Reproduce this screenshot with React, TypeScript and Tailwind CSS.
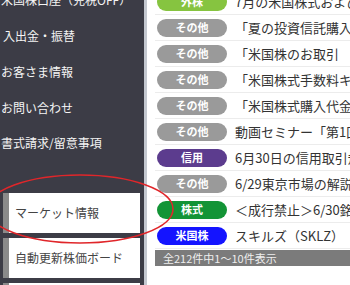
const font = { fontFamily: '"Noto Sans CJK JP", "Noto Sans", sans-serif' };

const news = [
  { tag: '外株', color: 'bg-[#86c440]', text: '7月の米国株式および取引時間について' },
  { tag: 'その他', color: 'bg-[#9a9a9a]', text: '「夏の投資信託購入キャンペーン」' },
  { tag: 'その他', color: 'bg-[#9a9a9a]', text: '「米国株のお取引' },
  { tag: 'その他', color: 'bg-[#9a9a9a]', text: '「米国株式手数料キャッシュバック」' },
  { tag: 'その他', color: 'bg-[#9a9a9a]', text: '「米国株式購入代金キャッシュバック」' },
  { tag: 'その他', color: 'bg-[#9a9a9a]', text: '動画セミナー「第1回」のご案内' },
  { tag: '信用', color: 'bg-[#5c3c8e]', text: '6月30日の信用取引規制について' },
  { tag: 'その他', color: 'bg-[#9a9a9a]', text: '6/29東京市場の解説' },
  { tag: '株式', color: 'bg-[#139436]', text: '＜成行禁止＞6/30銘柄について' },
  { tag: '米国株', color: 'bg-[#1414ff]', text: 'スキルズ（SKLZ）' },
];

function SideBox({ label }: { label: string }) {
  return (
    <div className="flex h-[40px] w-[137px] shrink-0 bg-white">
      <div className="w-[6px] bg-[#8a8a8a]" />
      <div className="flex items-center pl-[6px] text-[12px] text-[#444]">{label}</div>
    </div>
  );
}

export default function App() {
  return (
    <div className="relative flex h-[285px] w-[350px] overflow-hidden bg-white" style={font}>
      {/* sidebar */}
      <div className="flex w-[147px] shrink-0 flex-col border-r-[3px] border-[#c4c8d0] bg-[#3c3c46] pl-[1px] text-[12px] text-[#f4f4f4]">
        <div className="-mt-[8px] h-[16px] leading-[16px] whitespace-nowrap">米国株口座（免税OFF）</div>
        <div className="mt-[20px] h-[16px] pl-[2px] leading-[16px]">入出金・振替</div>
        <div className="mt-[20px] h-[16px] leading-[16px]">お客さま情報</div>
        <div className="mt-[20px] h-[16px] leading-[16px]">お問い合わせ</div>
        <div className="-ml-[1px] h-[5px] w-[3px] bg-white" />
        <div className="mt-[19px] h-[16px] leading-[16px] whitespace-nowrap">書式請求/留意事項</div>
        <div className="mt-[42px] flex flex-col gap-[5px] pl-[2px]">
          <SideBox label="マーケット情報" />
          <SideBox label="自動更新株価ボード" />
          <SideBox label="" />
        </div>
      </div>

      {/* news list */}
      <div className="flex min-w-0 flex-1 flex-col pl-[8px]">
        <div className="-mt-[11px] flex flex-col">
          {news.map((n, i) => (
            <div key={i} className="flex h-[26px] items-center border-b border-[#ececec] pl-[2px]">
              <span
                className={`flex h-[18px] w-[70px] shrink-0 items-center justify-center rounded-full text-[11px] font-bold text-white ${n.color}`}
              >
                {n.tag}
              </span>
              <span className="ml-[8px] whitespace-nowrap text-[13px] text-[#333]">{n.text}</span>
            </div>
          ))}
        </div>
        <div className="mt-[1px] flex h-[16px] items-center bg-[#7b7b7b] pl-[8px] text-[11px] text-[#eeeeee]">
          全212件中1～10件表示
        </div>
      </div>

      {/* red annotation circle */}
      <svg className="pointer-events-none absolute left-0 top-0" width="350" height="285">
        <ellipse cx="80" cy="209" rx="93" ry="34" fill="none" stroke="#e0262a" strokeWidth="1.5" />
      </svg>
    </div>
  );
}
